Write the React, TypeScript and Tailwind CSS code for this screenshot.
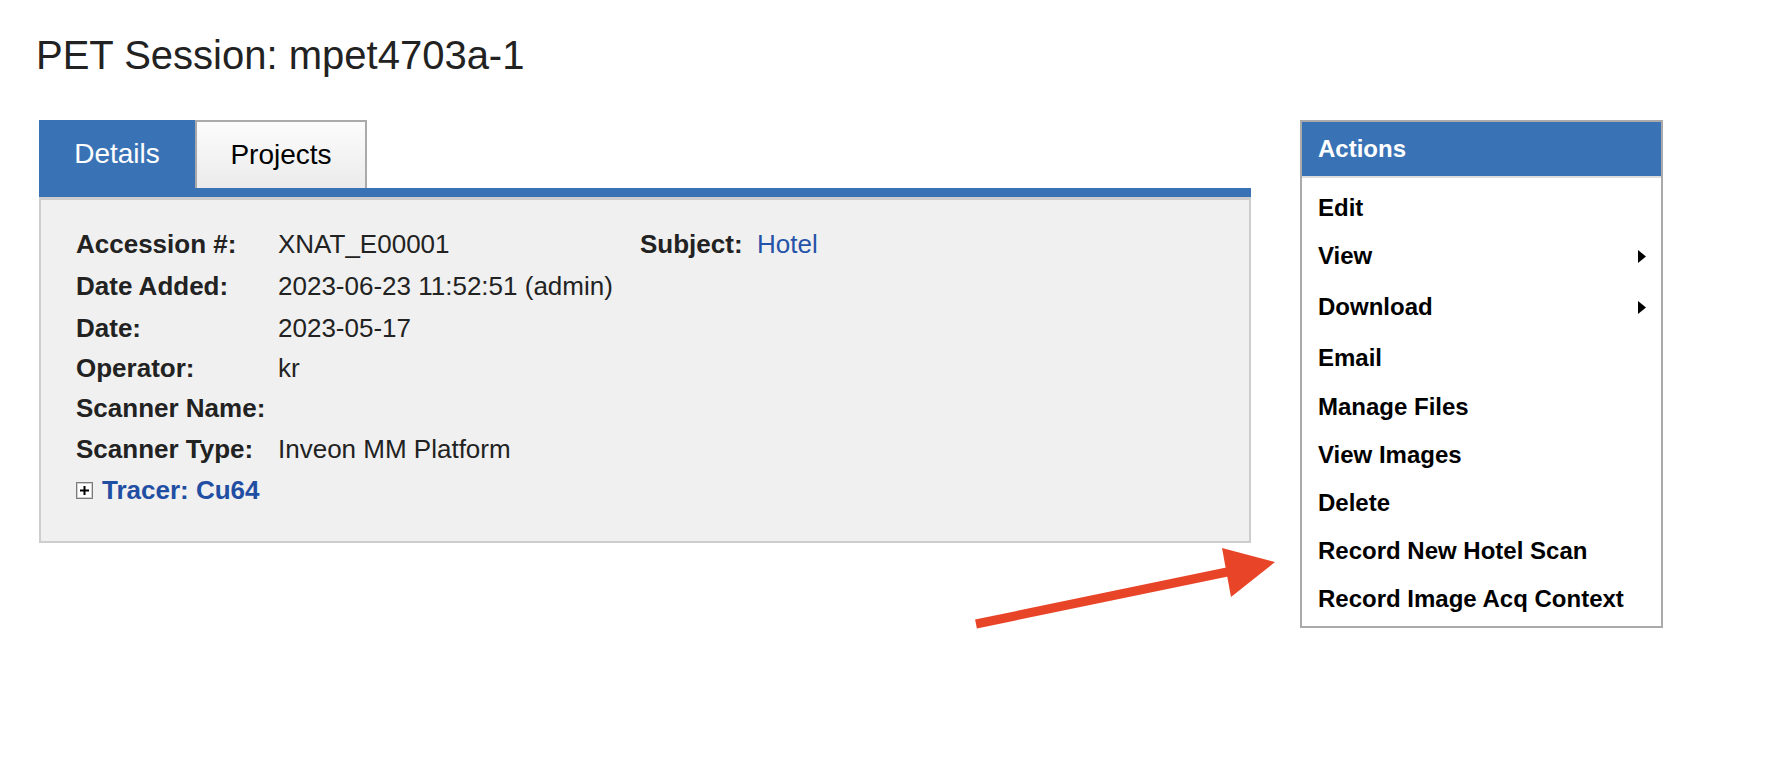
const rows: { label: string; value?: string; h: string }[] = [
  { label: 'Date Added:', value: '2023-06-23 11:52:51 (admin)', h: 'h-[43px]' },
  { label: 'Date:', value: '2023-05-17', h: 'h-[41px]' },
  { label: 'Operator:', value: 'kr', h: 'h-[39px]' },
  { label: 'Scanner Name:', h: 'h-[41px]' },
  { label: 'Scanner Type:', value: 'Inveon MM Platform', h: 'h-[41px]' },
];

const actions: { label: string; sub?: boolean; h: string }[] = [
  { label: 'Edit', h: 'h-[46px]' },
  { label: 'View', sub: true, h: 'h-[50px]' },
  { label: 'Download', sub: true, h: 'h-[52px]' },
  { label: 'Email', h: 'h-[50px]' },
  { label: 'Manage Files', h: 'h-[48px]' },
  { label: 'View Images', h: 'h-[48px]' },
  { label: 'Delete', h: 'h-[48px]' },
  { label: 'Record New Hotel Scan', h: 'h-[48px]' },
  { label: 'Record Image Acq Context', h: 'h-[48px]' },
];

const SubArrow = () => (
  <svg width="8" height="13" viewBox="0 0 8 13" className="shrink-0">
    <path d="M0 0 L8 6.5 L0 13 Z" fill="#000" />
  </svg>
);

const PlusBox = () => (
  <svg width="17" height="17" viewBox="0 0 17 17" className="shrink-0">
    <rect x="0.5" y="0.5" width="16" height="16" fill="#f4f4f4" stroke="#7a7a7a" />
    <rect x="1.5" y="1.5" width="14" height="14" fill="#fff" stroke="#cfcfcf" />
    <path d="M4 8.5 H13 M8.5 4 V13" stroke="#000" strokeWidth="2" />
  </svg>
);

const App = () => {
  return (
    <div className="relative min-h-[760px] w-[1792px] bg-white font-['Liberation_Sans',Arial,sans-serif] text-[#222]">
      <h1 className="pl-[36px] pt-[32px] text-[40px] leading-[46px] text-[#222]">
        PET Session: mpet4703a-1
      </h1>

      <div className="mt-[42px] flex items-start pl-[39px]">
        {/* details panel */}
        <div className="w-[1212px]">
          <div className="flex h-[68px]">
            <div className="flex w-[156px] items-center justify-center bg-[#3a73b5] text-[28px] text-white">
              Details
            </div>
            <div className="flex w-[172px] items-center justify-center border-2 border-b-0 border-[#aaa] bg-gradient-to-b from-[#fcfcfc] to-[#ebebeb] text-[28px] text-black">
              Projects
            </div>
          </div>
          <div className="h-[9px] bg-[#3a73b5]" />
          <div className="border-2 border-t-[3px] border-[#cdcdcd] bg-[#f0f0f0] pt-[24px] pb-[30px] pl-[35px] text-[26px]">
            <div className="flex h-[41px] items-center">
              <div className="w-[202px] font-bold">Accession #:</div>
              <div className="w-[362px]">XNAT_E00001</div>
              <div className="w-[117px] font-bold">Subject:</div>
              <div className="text-[#2553a8]">Hotel</div>
            </div>
            {rows.map((r) => (
              <div key={r.label} className={`flex items-center ${r.h}`}>
                <div className="w-[202px] font-bold">{r.label}</div>
                <div>{r.value}</div>
              </div>
            ))}
            <div className="flex h-[41px] items-center gap-[9px]">
              <PlusBox />
              <span className="font-bold text-[#1f4ea3]">Tracer: Cu64</span>
            </div>
          </div>
        </div>

        {/* actions menu */}
        <div className="ml-[49px] w-[363px] border-2 border-[#aaa] bg-white">
          <div className="flex h-[56px] items-center border-b-2 border-[#ddd] bg-[#3a73b5] pl-[16px] text-[24px] font-bold text-white">
            Actions
          </div>
          <div className="pt-[7px] pb-[3px]">
            {actions.map((a) => (
              <div
                key={a.label}
                className={`flex items-center justify-between pl-[16px] pr-[15px] text-[24px] font-bold text-black ${a.h}`}
              >
                <span>{a.label}</span>
                {a.sub && <SubArrow />}
              </div>
            ))}
          </div>
        </div>
      </div>

      {/* annotation arrow */}
      <svg
        className="pointer-events-none absolute left-0 top-0"
        width="1792"
        height="760"
        viewBox="0 0 1792 760"
      >
        <line x1="976" y1="624" x2="1232" y2="571" stroke="#e84427" strokeWidth="9" />
        <polygon points="1275,562 1222,548 1231,597" fill="#e84427" />
      </svg>
    </div>
  );
};

export default App;
